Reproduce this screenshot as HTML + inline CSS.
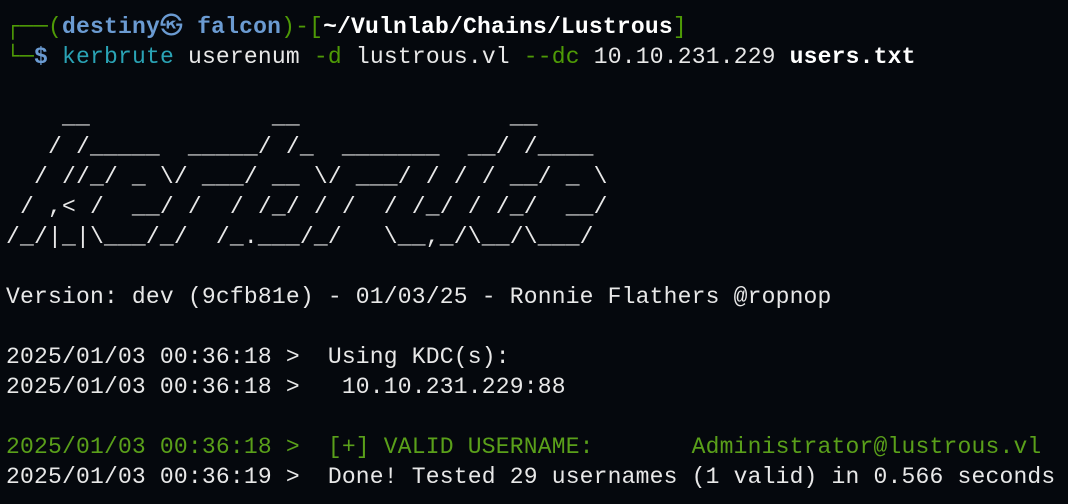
<!DOCTYPE html>
<html><head><meta charset="utf-8"><style>
html,body{margin:0;padding:0;background:#05080d;width:1068px;height:504px;overflow:hidden}
pre{margin:0;padding:12px 0 0 6px;font-family:"Liberation Mono","DejaVu Sans Mono","Noto Sans CJK JP",monospace;font-size:23px;letter-spacing:0.19px;line-height:30px;color:#e8e8e8;white-space:pre}
.g{color:#4e9a06}.b{color:#6b9bd2;font-weight:bold}.w{color:#fff;font-weight:bold}.t{color:#2aa3b5}.lg{color:#5aa01a}
</style></head><body>
<pre><span class="g">┌──(</span><span class="b">destiny㉿ falcon</span><span class="g">)-[</span><span class="w">~/Vulnlab/Chains/Lustrous</span><span class="g">]</span>
<span class="g">└─</span><span class="b">$</span> <span class="t">kerbrute</span> userenum <span class="g">-d</span> lustrous.vl <span class="g">--dc</span> 10.10.231.229 <b style="color:#fff">users.txt</b>

    __             __               __
   / /_____  _____/ /_  _______  __/ /____
  / //_/ _ \/ ___/ __ \/ ___/ / / / __/ _ \
 / ,&lt; /  __/ /  / /_/ / /  / /_/ / /_/  __/
/_/|_|\___/_/  /_.___/_/   \__,_/\__/\___/

Version: dev (9cfb81e) - 01/03/25 - Ronnie Flathers @ropnop

2025/01/03 00:36:18 &gt;  Using KDC(s):
2025/01/03 00:36:18 &gt;   10.10.231.229:88

<span class="lg">2025/01/03 00:36:18 &gt;  [+] VALID USERNAME:       Administrator@lustrous.vl</span>
2025/01/03 00:36:19 &gt;  Done! Tested 29 usernames (1 valid) in 0.566 seconds</pre>
</body></html>
